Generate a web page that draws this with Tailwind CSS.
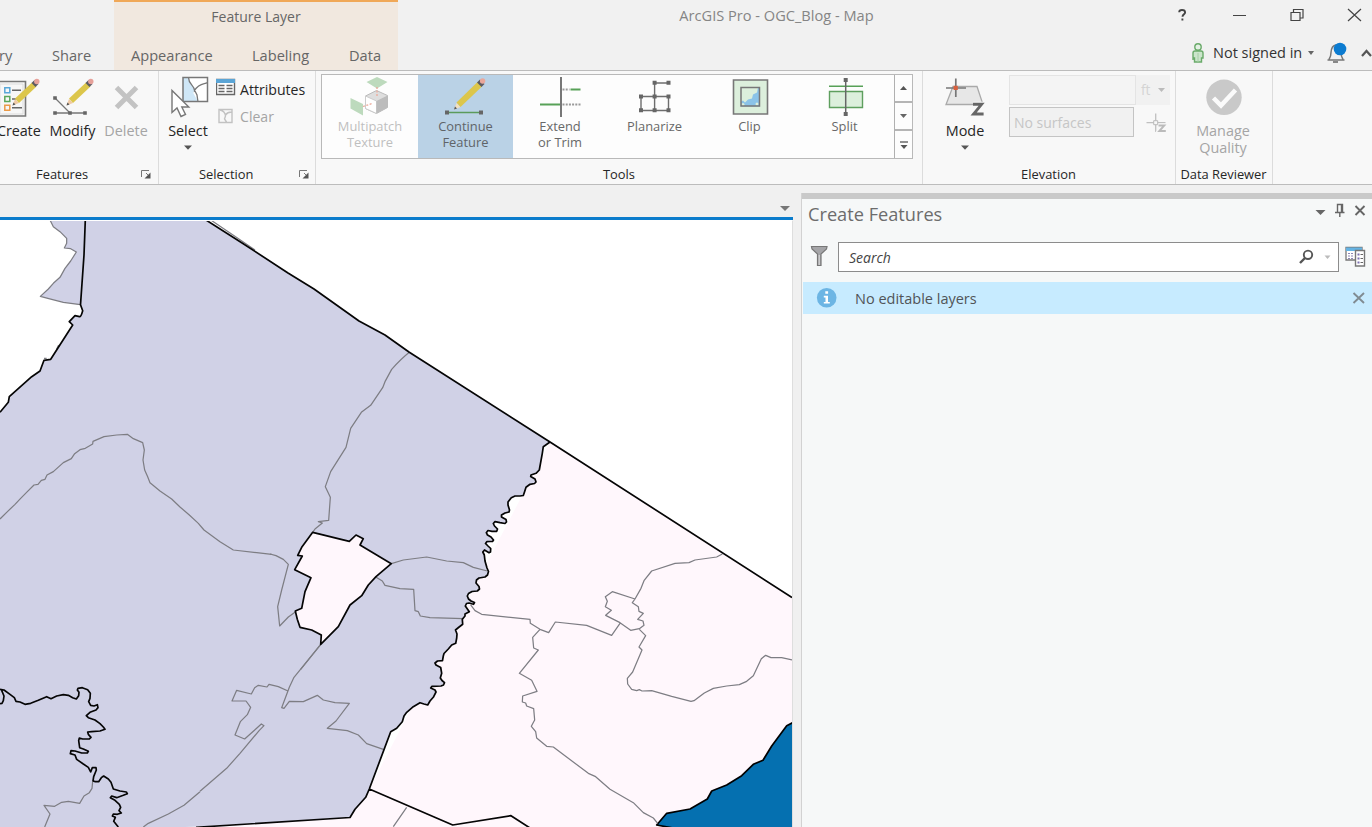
<!DOCTYPE html>
<html lang="en">
<head>
<meta charset="utf-8">
<title>ArcGIS Pro - OGC_Blog - Map</title>
<script src="https://cdn.jsdelivr.net/npm/@tailwindcss/browser@4"></script>
</head>
<body class="w-[1372px] h-[827px] overflow-hidden flex flex-col bg-[#f0f0f0] font-['Open_Sans','Noto_Sans',sans-serif] text-[#262626] whitespace-nowrap">

<!-- Title bar and tabs -->
<header class="h-[71px] shrink-0 flex bg-[#f1f1f1] border-b border-[#bcbcbc] text-[14.6px] text-[#666]">
  <div class="w-[114px] flex items-end">
    <span class="w-[53px] leading-[30px] -ml-[1px]">ry</span>
    <span class="leading-[30px]">Share</span>
  </div>
  <div class="w-[284px] bg-[#f1e8df] border-t-2 border-[#f0a858] flex flex-col justify-between">
    <div class="text-center leading-[30px] text-[14px]">Feature Layer</div>
    <div class="flex leading-[30px] pl-[17px]">
      <span class="w-[121px]">Appearance</span>
      <span class="w-[97px]">Labeling</span>
      <span>Data</span>
    </div>
  </div>
  <div class="w-[757px] text-center leading-[31px] text-[14.6px] text-[#858585]">ArcGIS Pro - OGC_Blog - Map</div>
  <div class="flex-1 flex flex-col">
    <svg class="w-[217px] h-[34px]" viewBox="1155 0 217 34" fill="none" stroke="#444">
      <path d="M1179.2 12.2q0-2.2 2.8-2.2 3.1 0 3.1 2.4c0 1.7-2.6 2.1-2.6 4.4M1182.4 18.4v2" stroke-width="1.9"/>
      <path d="M1233 15.5h13"/>
      <path d="M1291 12.5h9v8h-9zM1293.500 12v-2.500h9.500v8.500h-3" stroke-width="1.200"/>
      <path d="M1348 9l13 12M1361 9l-13 12" stroke-width="1.200"/>
    </svg>
    <div class="flex items-center h-[36px] text-[14.5px] text-[#333]">
      <svg class="w-[58px] h-[36px]" viewBox="1155 34 58 36"><circle cx="1198" cy="47" r="3.200" fill="#e4f1e4" stroke="#69aa69" stroke-width="1.400"/><path d="M1193 60v-7q0-2 2-2h6q2 0 2 2v5h-1.500v4h-7v-4h-1.500z" fill="#cbe5cb" stroke="#69aa69" stroke-width="1.400"/><path d="M1198 53v9" stroke="#a6cea6"/></svg>
      <span class="w-[93px] leading-[36px] pt-[2px]">Not signed in</span>
      <svg class="flex-1 h-[36px]" viewBox="1306 34 66 36"><path d="M1308 51h6l-3 4z" fill="#666"/><path d="M1327.500 60h17M1329 59.500q2-3 2-7 .5-7 5-7.500 4.500.5 5 7.500 0 4 2 7" stroke="#777" stroke-width="1.500" fill="#f1f1f1"/><path d="M1333 61h5v2h-5z" fill="#888"/><circle cx="1340" cy="49" r="6.300" fill="#0c7bd0"/><path d="M1362 56l4.500-5 4.500 5" stroke="#555" stroke-width="2.200" fill="none"/></svg>
    </div>
  </div>
</header>

<!-- Ribbon -->
<section class="h-[114px] shrink-0 flex bg-[#f8f8f8] border-b border-[#bcbcbc] text-[14.4px]">

  <!-- Features -->
  <div class="w-[158px] flex flex-col">
    <div class="flex h-[94px] pt-[3px]">
      <div class="w-[44px] flex flex-col">
        <svg class="w-[44px] h-[47px]" viewBox="0 74 44 47">
          <path d="M-2 81.500H25.500V116H-2z" fill="#f7f7f7" stroke="#777" stroke-width="1.600"/>
          <path d="M0 84h23v30H0z" fill="none" stroke="#ddd"/>
          <g fill="none" stroke-width="1.500"><path d="M4.800 87.800h5v5h-5z" stroke="#58a7d8"/><path d="M4.800 96.500h5v5h-5z" stroke="#5aa75a"/><path d="M4.800 105.300h5v5h-5z" stroke="#eb9a48"/></g>
          <path d="M12 90.300h9M12 99h4M12 107.800h10" stroke="#666" stroke-width="1.400"/>
          <path d="M12.500 105.500l2.500-6.500 4 4z" fill="#efc9a5"/><path d="M12.500 105.500l1-3 2 2z" fill="#555"/><path d="M15 98.500L32 82.500l4.500 4L19 103z" fill="#dcc64b"/><path d="M31.500 83l3-3 4 4-3 3z" fill="#5b5b63"/><circle cx="36.800" cy="81.500" r="2.700" fill="#e6a19a"/>
        </svg>
        <span class="leading-[20px] -ml-[3px] tracking-[-0.1px]">Create</span>
      </div>
      <div class="w-[57px] flex flex-col items-center">
        <svg class="w-[57px] h-[47px]" viewBox="44 74 57 47">
          <path d="M55 98l15 15M55 113h30" stroke="#777" stroke-width="1.300"/>
          <path d="M53.200 96.200h3.600v3.600h-3.600zM53.200 111.200h3.600v3.600h-3.600zM68.200 111.200h3.600v3.600h-3.600zM83.200 111.200h3.600v3.600h-3.600z" fill="#666"/>
          <path d="M66.500 105.500l2.500-6.500 4 4z" fill="#efc9a5"/><path d="M66.500 105.500l1-3 2 2z" fill="#555"/><path d="M69 98.500L86 82.500l4.500 4L73 103z" fill="#dcc64b"/><path d="M85.500 83l3-3 4 4-3 3z" fill="#5b5b63"/><circle cx="90.800" cy="81.500" r="2.700" fill="#e6a19a"/>
        </svg>
        <span class="leading-[20px]">Modify</span>
      </div>
      <div class="w-[50px] flex flex-col items-center text-[#a5a5a5]">
        <svg class="w-[50px] h-[47px]" viewBox="101 74 50 47"><path d="M116.500 87.500l20 20M136.500 87.500l-20 20" stroke="#c3c3c3" stroke-width="5"/></svg>
        <span class="leading-[20px]">Delete</span>
      </div>
    </div>
    <div class="flex items-center h-[18px] text-[12.9px]"><span class="w-[141px] pl-[36px] pt-px">Features</span><svg class="w-[11px] h-[11px]" viewBox="0 0 11 11"><path d="M.5 8V1.500H8M5 4l4 4" stroke="#777" fill="none"/><path d="M9.500 3.500v6h-6z" fill="#555"/></svg></div>
  </div>

  <!-- Selection -->
  <div class="w-[157px] flex flex-col border-l border-[#dcdcdc]">
    <div class="flex h-[94px] pt-[3px]">
      <div class="w-[58px] flex flex-col items-center">
        <svg class="w-[58px] h-[47px]" viewBox="159 74 58 47">
          <path d="M183 77.500h24.500v24H183z" fill="#fff"/><path d="M183 77.500h5.500c0 8 7 8 5.500 14l-1 1 5 9h-15z" fill="#cfe7f7"/>
          <path d="M188.500 77.500c0 7 6 8 6 13 5-8 10-6 13-8M195 91l2 4 1 7" fill="none" stroke="#777" stroke-width="1.300"/>
          <path d="M183 77.500h24.500v24H183z" fill="none" stroke="#777" stroke-width="1.500"/>
          <path d="M172 90.500v22l5-4.500 4 8.500 4.500-2-3.700-7.500h7z" fill="#fff" stroke="#777" stroke-width="1.400"/>
        </svg>
        <span class="leading-[20px]">Select</span>
        <svg class="w-[8px] h-[5px] mt-[4px]" viewBox="0 0 8 5"><path d="M0 .5h8L4 4.800z" fill="#555"/></svg>
      </div>
      <div class="flex flex-col -ml-px">
        <div class="flex items-center h-[27px] text-[14.1px]">
          <svg class="w-[24px] h-[27px]" viewBox="216 74 24 27"><path d="M216.500 79.500h18v15h-18z" fill="#fff" stroke="#666" stroke-width="1.400"/><path d="M216 79h19v4h-19z" fill="#5ba5d6"/><path d="M218.500 85.500h6M218.500 88.500h6M218.500 91.500h6M226.500 85.500h6M226.500 88.500h6M226.500 91.500h6" stroke="#666" stroke-width="1.300"/></svg>
          <span class="pt-[4px]">Attributes</span>
        </div>
        <div class="flex items-center h-[27px] text-[#a5a5a5] text-[14.1px]">
          <svg class="w-[24px] h-[27px]" viewBox="216 101 24 27"><path d="M219 109.500h13v13h-13zM220 110q5 1 5.500 6l-1 3 2 3M225.500 115q2-3 6-3" fill="none" stroke="#c2c2c2" stroke-width="1.400"/></svg>
          <span class="pt-[4px]">Clear</span>
        </div>
      </div>
    </div>
    <div class="flex items-center h-[18px] text-[12.9px]"><span class="w-[140px] pl-[40px] pt-px">Selection</span><svg class="w-[11px] h-[11px]" viewBox="0 0 11 11"><path d="M.5 8V1.500H8M5 4l4 4" stroke="#777" fill="none"/><path d="M9.500 3.500v6h-6z" fill="#555"/></svg></div>
  </div>

  <!-- Tools gallery -->
  <div class="w-[607px] flex flex-col border-l border-[#dcdcdc] pt-[3px] pl-[5px] pr-[9px]">
    <div class="h-[85px] flex bg-[#fdfdfd] border border-[#b9b9b9] text-[12.9px] leading-[16px] text-[#686868]">
      <div class="w-[96px] flex flex-col items-center text-center text-[#bfbfbf]">
        <svg class="w-[96px] h-[43px] shrink-0" viewBox="322 75 96 43"><path d="M366.500 82l10.500-5 10.500 5-10.500 6.500zM350.500 98l12.500 6v11.500l-12.500-7z" fill="#bddabd"/><path d="M365.500 96l11-5.500 11 5v12l-11 6-11-5z" fill="#dedede" stroke="#bbb"/><path d="M365.500 96l11 5v12.500l-11-5z" fill="#fff" stroke="#ccc"/><path d="M376.500 101l11-5.500v12l-11 6z" fill="#bcbcbc"/><path d="M377 87v10M363 106.500l9-3" stroke="#eba898" stroke-dasharray="2 1.500" stroke-width="1.300"/></svg>
        <span>Multipatch<br>Texture</span>
      </div>
      <div class="w-[95px] flex flex-col items-center text-center bg-[#bad2e6] text-[#606468]">
        <svg class="w-[95px] h-[43px] shrink-0" viewBox="418 75 95 43"><path d="M447 112.600h34" stroke="#5b9b5b" stroke-width="1.500"/><path d="M445 110.600h4v4h-4zM479 110.600h4v4h-4z" fill="#666"/><path d="M454 109.500l2.500-6.500 4 4z" fill="#f3e0c0"/><path d="M454 109.500l1-3 2 2z" fill="#555"/><path d="M456.500 102.500L477.500 82l4.500 4.500L460.500 107z" fill="#dcc64b"/><path d="M477 82.500l3-3 4.500 4.500-3 3z" fill="#5b5b63"/><circle cx="482.600" cy="81" r="2.700" fill="#e9a79b"/></svg>
        <span>Continue<br>Feature</span>
      </div>
      <div class="w-[94px] flex flex-col items-center text-center">
        <svg class="w-[94px] h-[43px] shrink-0" viewBox="513 75 94 43"><path d="M561 77v40" stroke="#777" stroke-width="2"/><path d="M570.500 89.500h10M540 104.500h20" stroke="#58a158" stroke-width="2.200"/><path d="M562.500 89.500h7M562.500 104.500h18" stroke="#999" stroke-width="2" stroke-dasharray="2 1.200"/></svg>
        <span>Extend<br>or Trim</span>
      </div>
      <div class="w-[95px] flex flex-col items-center">
        <svg class="w-[95px] h-[43px] shrink-0" viewBox="607 75 95 43"><path d="M641 96.500h27.500v14H641zM654.600 110V83h14" fill="none" stroke="#6d6d6d" stroke-width="1.400"/><path d="M639 94.500h4v4h-4zM652.600 94.500h4v4h-4zM666.500 94.500h4v4h-4zM639 108.300h4v4h-4zM652.600 108.300h4v4h-4zM666.500 108.300h4v4h-4zM652.600 80.700h4v4h-4zM666.500 80.700h4v4h-4z" fill="#666"/></svg>
        <span>Planarize</span>
      </div>
      <div class="w-[95px] flex flex-col items-center">
        <svg class="w-[95px] h-[43px] shrink-0" viewBox="702 75 95 43"><path d="M733.500 80h34v34h-34z" fill="#dcefdc" stroke="#777" stroke-width="1.600"/><path d="M741 87.500h19v19h-19z" fill="#8bc3e8"/><path d="M741 87.500h17l-1 5-4 2-1 4-4 1-3 3-2-2-2 1z" fill="#dcefdc"/><circle cx="743" cy="104.500" r="1.500" fill="#dcefdc"/><circle cx="757" cy="104" r="1.500" fill="#dcefdc"/><path d="M741 87.500h18.500v18.500h-18.500z" fill="none" stroke="#777" stroke-width="1.500"/></svg>
        <span>Clip</span>
      </div>
      <div class="w-[95px] flex flex-col items-center">
        <svg class="w-[95px] h-[43px] shrink-0" viewBox="797 75 95 43"><path d="M829.500 91.500h33v16h-33z" fill="#dcefdc" stroke="#5e9f5e" stroke-width="1.400"/><path d="M829 86.300h34" stroke="#58a158" stroke-width="1.600"/><path d="M845.700 80v34" stroke="#666" stroke-width="1.500"/><path d="M843.700 78h4v4h-4zM843.700 112h4v4h-4z" fill="#666"/></svg>
        <span>Split</span>
      </div>
      <div class="flex-1 ml-[2px] flex flex-col border-l border-[#b0b0b0]">
        <div class="h-[28px] flex items-center justify-center border-b-2 border-[#b5b5b5]"><svg class="w-[7px] h-[4px]" viewBox="0 0 7 4"><path d="M0 4h7L3.500 0z" fill="#555"/></svg></div>
        <div class="h-[28px] flex items-center justify-center border-b-2 border-[#b5b5b5]"><svg class="w-[7px] h-[4px]" viewBox="0 0 7 4"><path d="M0 0h7L3.500 4z" fill="#666"/></svg></div>
        <div class="flex-1 flex items-center justify-center"><svg class="w-[8px] h-[8px]" viewBox="0 0 8 8"><path d="M0 1h8" stroke="#555" stroke-width="1.300"/><path d="M.5 4h7L4 8z" fill="#555"/></svg></div>
      </div>
    </div>
    <div class="text-[12.9px] leading-[18px] pt-[6px] text-center pl-[4px]">Tools</div>
  </div>

  <!-- Elevation -->
  <div class="w-[253px] flex flex-col border-l border-[#dcdcdc]">
    <div class="flex h-[94px] pt-[3px]">
      <div class="w-[84px] mr-[2px] flex flex-col items-center">
        <svg class="w-[84px] h-[47px]" viewBox="923 74 84 47"><path d="M953 86.500h24l6 18h-37z" fill="#e7e7e7" stroke="#aaa" stroke-width="1.300"/><path d="M946 88h20M955.800 78.500V97" stroke="#777" stroke-width="1.700"/><path d="M953.600 85.800h4.200v4.200h-4.200z" fill="#d8603e"/><path d="M973 104.300h9l-8 10h9.500" fill="none" stroke="#f8f8f8" stroke-width="5"/><path d="M973 104.300h8.600l-8 9.700h10" fill="none" stroke="#666" stroke-width="2.900"/></svg>
        <span class="leading-[20px]">Mode</span>
        <svg class="w-[8px] h-[5px] mt-[4px]" viewBox="0 0 8 5"><path d="M0 .5h8L4 4.800z" fill="#555"/></svg>
      </div>
      <div class="flex flex-col gap-[2px] pt-[1px] text-[#c6c6c6]">
        <div class="flex h-[30px]">
          <div class="w-[127px] border border-[#e4e4e4] bg-[#f4f4f4]"></div>
          <div class="w-[34px] bg-[#f1f1f1] flex items-center pl-[5px] gap-[8px] text-[13.6px] text-[#d4d4d4]"><span>ft</span><svg class="w-[7px] h-[4px]" viewBox="0 0 7 4"><path d="M0 0h7L3.500 4z" fill="#bbb"/></svg></div>
        </div>
        <div class="flex h-[30px]">
          <div class="w-[125px] border border-[#c4c4c4] bg-[#f1f1f1] leading-[30px] pl-[4px] text-[14px]">No surfaces</div>
          <svg class="w-[36px] h-[30px]" viewBox="1134 107 36 30"><path d="M1146.500 122.700h19M1155.700 113.500v18.500" stroke="#c0c0c0" stroke-width="1.300"/><path d="M1153.700 120.700h4v4h-4z" fill="#f8f8f8" stroke="#bbb"/><path d="M1158.500 125.500h6l-5.500 5.800h7" fill="none" stroke="#f8f8f8" stroke-width="4"/><path d="M1158.500 125.500h5.800l-5 5.500h6.500" fill="none" stroke="#bbb" stroke-width="1.900"/></svg>
        </div>
      </div>
    </div>
    <div class="text-[12.9px] leading-[18px] text-center pr-[1px]">Elevation</div>
  </div>

  <!-- Data Reviewer -->
  <div class="w-[98px] flex flex-col border-x border-[#dcdcdc]">
    <div class="flex flex-col items-center text-center h-[94px] pt-[3px] text-[#a5a5a5]">
      <svg class="w-[96px] h-[48px] shrink-0" viewBox="1176 74 96 48"><circle cx="1224" cy="97.300" r="17.700" fill="#c9c9c9"/><path d="M1213.500 98l7.500 7.500 14.500-15.500" stroke="#fbfbfb" stroke-width="4.500" fill="none"/></svg>
      <span class="text-[14.4px] leading-[17px] pr-[2px]">Manage<br>Quality</span>
    </div>
    <div class="text-[12.9px] leading-[18px] text-center pr-px">Data Reviewer</div>
  </div>
</section>

<!-- Workspace -->
<main class="flex-1 flex min-h-0">
  <div class="w-[793px] flex flex-col">
    <div class="h-[35px] shrink-0 border-b-3 border-[#0b7ccc] flex items-center justify-end pr-[3px] pt-[15px]"><svg class="w-[10px] h-[5px]" viewBox="0 0 10 5"><path d="M0 0h10L5 5z" fill="#777"/></svg></div>
    <div class="flex-1 min-h-0 border-r border-t border-t-white border-r-[#dedede]">
    <svg class="w-[792px] h-[606px] bg-white" viewBox="0 221 792 606" fill="none" stroke-linejoin="round">
      <path fill="#fff7fc" d="M550 442L792 597.500V827H190L350 817.300 369.300 789z"/>
      <path fill="#d0d1e6" d="M50 220L53.300 226.700 60 231.700 66.700 238.300V243.300L64.300 248 70.700 248.700 76.300 252 70.700 261 65 268.300 60 277.300 53.300 283.300 48.300 289 40.300 296.300 51.700 299.300 63.300 302.300 80.300 304.700 82.700 310.700 80 316.300 75 315.700 69.300 321.700 72.700 325 50.700 359.300 44 360.300 40 371 31.700 376.700 9.300 396.700 8.300 402.300 0 412.300V827H185L200 826.500 350 817.300 355 809.300 365.700 797.300 369.300 789 390.700 731.700 396.700 728.300 402.300 721.700 406.700 712.300 413.300 706.700 420 702.700 427.700 704.700 430 701 433.300 697.300 436 691.700 430.700 687.300 441.700 685.300 444.300 682.700 440.700 678.300 441.700 673.300 440.700 668.300 435 664.300 436.700 661 442.700 660.700 443.300 655 451.700 645 455.700 643.300 456.700 635 455 631 462.700 624.300 462.300 619.300 465 614 469.300 611.700 465.300 606.700 466.700 603.300 474.700 602.700 467.300 596 470 592.700 477.300 591 479.300 588.300 475.700 582.700 477.300 579 486.700 576 488.300 571.700 485 560 484.300 551 490 552.700 490.700 549.300 485.300 544 493.700 540.700 486.300 532.700 488.300 530.700 496.700 531.300 497.700 529 493.300 524 495 521.700 505.300 523.300 506.300 520.700 501 516 509.300 511.700 507.700 503.300 511.300 497.700 523.300 495 526 487.300 530 484.300 535.700 483V480L530.700 476 539.300 470 543.300 446.700 550 442 409.300 352.300 385 335 359 321 314 289 288 273 206 220z"/>
      <path fill="#0570b0" stroke="#000" stroke-width="1.700" d="M794 722L786.700 725.700 771.700 746 763 760.300 753.300 764.300 741.700 775.700 726.700 785 711.700 791 707.300 799 690 809 666.700 813.300 656.700 825 673 828H794z"/>

      <!-- District boundaries -->
      <g stroke="#7d7d83" stroke-width="3.700">
        <g transform="translate(0 215) scale(.33333)">
          <path d="M150 15L160 35 180 50 200 70V85L193 99 212 101 229 111 212 138 195 160 180 187 160 205 145 222 121 244 155 253 190 262 241 269M628 12L720 74 765 105M176 390L170 402M132 430L140 430"/>
          <path d="M0 912L20 892 45 868 62 850 82 830 102 810 114 808 124 796 135 793 141 780 160 770 190 743 214 731 224 716 240 704 256 700 278 687 279 679 312 665 350 660 382 658 400 671 428 683 433 705 429 735 434 765 443 785 450 803 480 828 515 852 540 876 568 900 595 925 612 945 660 980 700 1005 770 1013 815 1018"/>
        </g>
        <g transform="translate(270 330) scale(.33333)">
          <path d="M418 67Q395 85 365 118L345 155 338 173 302 226 274 247 242 295 228 352 182 425 166 470 181 502 176 571 145 575 157 579 135 597 128 607M0 672L18 677 40 688 55 703 35 780 23 830 29 888 55 861 76 846M152 943L92 1018"/>
          <path d="M364 701L400 690 470 681 530 693 580 698 610 712 652 723M316 740L337 753 345 766 390 776 431 778 435 842 445 845 451 858 480 863 580 866"/>
        </g>
        <g transform="translate(440 430) scale(.33333)">
          <path d="M92 525L105 542 125 553 270 568 271 580 300 598 326 608 346 576 440 586 515 616 540 580M585 507L517 485 496 500 502 514 496 530 514 541 497 556 540 578 572 601 598 596 612 586 609 573 593 568 610 550 597 544 595 530 577 518 585 507 603 475 612 452 635 423 705 400 747 398 765 390 830 381 847 372"/>
          <path d="M300 598L278 622 281 654 295 660 238 730 275 751 291 784 248 798 247 816 257 819 260 828 281 836 284 870 274 889 287 905 290 924 320 949 340 951 445 1030 467 1040 510 1078 580 1118 610 1148 640 1164 653 1180M598 598L617 617 597 651 606 660 578 726 562 745 563 762 575 778 590 782 598 779 606 783 635 782 695 799 753 814 762 812 793 789 820 775 860 768 898 764 920 754 940 737 964 686 977 676 993 683 1025 683 1056 690"/>
        </g>
        <g transform="translate(0 630) scale(.33333)"><path d="M278 455L276 475 268 488 252 498 239 520 205 514 185 517 164 529 132 526 150 552 134 591M600 485L552 526 505 552 445 580 430 591"/></g>
        <g transform="translate(200 620) scale(.33333)"><path d="M362 74L282 172 268 202 245 263 252 265 268 244 310 245 352 226 370 240 405 248 448 250 408 303 382 325 442 332 475 345 500 371 550 388M264 213L235 200 207 193 201 201 175 196 164 203 154 222 110 211 96 243 138 243 152 262 142 284 121 305 105 345 134 357 184 312 192 317 178 331 120 400 80 445 0 514M620 562L580 620"/></g>
      </g>

      <!-- State boundaries -->
      <g stroke="#050505" stroke-width="1.700">
        <path fill="#fff7fc" d="M312.700 532.300L349.300 541.300 356 535 363.300 538.700 360 545 391.300 563.700 376 576.700 368.300 585 361.700 595.700 350 605 338.300 626.700 320.700 644.300 321.300 635 311.700 630 300 627.300 297.300 619.300 295.300 611 301.700 608.300 305 591.700 311 577.700 294.700 569.700 302.300 556 297.700 555.300 301.700 547.300z"/>
        <path d="M85.300 220L84 255 80.500 304.700 82.700 310.700Q81 317 79.500 316.700L75 315.700 69.300 321.700 72.700 325 50.700 359.300 44 360.300 40 371 31.700 376.700 9.300 396.700 8.300 402.300 0 412.300M206 220L241.700 242.700 288 273 314 289 359 321 385 335 409.300 352.300 550 442 792 597.500"/>
        <path d="M550 442L543.300 446.700 542.300 453.300 539.300 470 536 473.300 531 475 530.700 476.500 535 479 536 482 534.500 483.500 530 484.300 526 487.300 524.500 492 523.300 495.500 520 496 515 496 511.300 497.700 508 502 508 505 509.500 510 509 512 505 513 501.500 515 501.500 517 506 519.500 506.500 522 505 523.500 500 522.700 495 521.700 493.300 523.500 494.500 526 497.500 529 496.700 531.300 492 531.300 488 530.500 486.300 532.700 487.500 535 491 537 493.500 540 492.500 541.500 487 541.500 485.500 543.500 488 546 490.700 548.500 490.500 552 489 552.700 484.500 550 482.800 552 484.300 555 485 561 487 568 488.500 571.500 487.500 575 485 577 479 578 476.500 580 476 583 479 586.500 479.500 589 477.300 591 472 591.500 468.500 593.500 467.300 596 468.500 599 471 601 474.500 602.500 473.500 604.300 469 603 466.500 603.500 465.300 606 469.300 611.700 465 614 465 616 462.300 619.300 462.700 624.300 458.500 627.500 455.500 630 457 634 456.700 638 455.700 643.300 451.700 645 448.300 649 444 653.500 443.300 656 442.500 660.700 437.500 661 435 663 436 665 440.700 667.500 441.700 673.300 440.300 678 442 680.500 444.500 682.700 443.500 685 441 686 432 686.300 430.700 688 435 690 436 692 433.300 697.300 430 701 427.700 705 424 704 420 702.700 413.300 706.700 406.700 712.300 404 716 402.300 721.700 396.700 728.300 390.700 731.700 369.300 789 365.700 797.300 355 809.300 350 817.500 196 827.300M369.300 789L452.700 825 511 815.700 530 828"/>
        <path transform="translate(0 630) scale(.33333)" stroke-width="5" d="M0 178L12 180 30 193 43 203 48 214 60 216 75 223 92 220 115 211 140 200 153 206 170 198 190 194 205 196 218 203 229 207 236 197 237 187 232 180 234 175 247 173 263 179 271 190 270 205 266 215 272 226 282 228 292 224 294 233 288 240 270 247 259 257 265 263 285 270 300 281 310 291 315 298 300 303 275 305 263 306 265 313 273 322 268 327 248 327 238 324 236 332 239 353 250 357 265 364 262 369 245 369 225 363 213 362 211 371 225 375 230 388 250 402 265 412 272 426 277 413 288 413 289 420 281 440 279 453 286 455 296 455 304 443 311 438 325 447 333 457 340 477 360 483 379 486 382 491 370 496 350 503 335 498 331 503 345 511 358 523 362 532 357 542 364 549 352 553 340 552 337 558 346 562 341 574 355 591M4 179L12 198 10 212 6 220 0 221"/>
      </g>
    </svg>
    </div>
  </div>

  <!-- Create Features pane -->
  <aside class="ml-[8px] mt-[8px] w-[571px] flex flex-col bg-[#f6f8f8] border-l border-[#d2d2d2]">
    <div class="h-[6px] bg-[#c9c9c9] shrink-0"></div>
    <div class="flex h-[43px] pl-[6px] text-[18.2px] text-[#6c6c6c]">
      <h2 class="leading-[30px] flex-1">Create Features</h2>
      <svg class="w-[60px] h-[32px]" viewBox="1312 199 60 32" fill="none" stroke="#666"><path d="M1315.500 210h10l-5 5z" fill="#666" stroke="none"/><path d="M1337.500 212v-7.500h5v7.500M1335 212.500h9.500M1339.800 213v4" stroke-width="1.400"/><path d="M1341.800 205v7" stroke-width="2"/><path d="M1355.500 206l9 9M1364.500 206l-9 9" stroke-width="1.900"/></svg>
    </div>
    <div class="flex items-center h-[30px]">
      <svg class="w-[36px] h-[30px]" viewBox="802 242 36 30"><path d="M811.500 246.500h15.500l-.5 2.500-5.500 5v11.500h-3.500V254l-5.500-5z" fill="#a5a5a8" stroke="#777" stroke-width="1.200"/><path d="M819.200 255v10" stroke="#ddd"/></svg>
      <div class="w-[501px] h-[30px] bg-white border border-[#8c8c8c] flex items-center pl-[10px] text-[14px] text-[#444]">
        <span class="italic flex-1">Search</span>
        <svg class="w-[44px] h-[28px]" viewBox="1294 243 44 28"><circle cx="1308" cy="254.800" r="4.200" fill="none" stroke="#555" stroke-width="1.900"/><path d="M1305 258l-5 5" stroke="#555" stroke-width="2.400"/><path d="M1324.500 255.500h6l-3 3.500z" fill="#bbb"/></svg>
      </div>
      <svg class="w-[33px] h-[30px]" viewBox="1339 242 33 30"><path d="M1346 247.500h16v12.500h-16z" fill="#fff" stroke="#777" stroke-width="1.300"/><path d="M1346 247.500h16v3.500h-16z" fill="#65b4e4"/><path d="M1348 253.500h6M1348 256h6M1348 258.500h6" stroke="#8d86b5" stroke-dasharray="2 1"/><path d="M1355.500 250.500h9v15.500h-9z" fill="#fff" stroke="#777" stroke-width="1.400"/><path d="M1357.500 254.500h2M1357.500 258.500h2M1357.500 262.500h2" stroke="#7a6fb0" stroke-width="2"/><path d="M1360.500 254.500h2.500M1360.500 258.500h2.500M1360.500 262.500h2.500" stroke="#666"/></svg>
    </div>
    <div class="mt-[10px] ml-px h-[32px] bg-[#c7ebff] flex items-center text-[14.5px] text-[#505458]">
      <svg class="w-[52px] h-[32px]" viewBox="803 282 52 32"><circle cx="826.700" cy="297.800" r="9.800" fill="#6cb5e4"/><path d="M825.300 291.300h2.800v2.500h-2.800zM823.800 295.800h4.200v6.200h1.800v1.600h-6v-1.600h1.700v-4.600h-1.700z" fill="#fff"/></svg>
      <span class="flex-1 pt-[2px]">No editable layers</span>
      <svg class="w-[32px] h-[32px]" viewBox="1340 282 32 32"><path d="M1353.500 293l10.500 10M1364 293l-10.500 10" stroke="#808b92" stroke-width="1.900"/></svg>
    </div>
  </aside>
</main>
</body>
</html>
